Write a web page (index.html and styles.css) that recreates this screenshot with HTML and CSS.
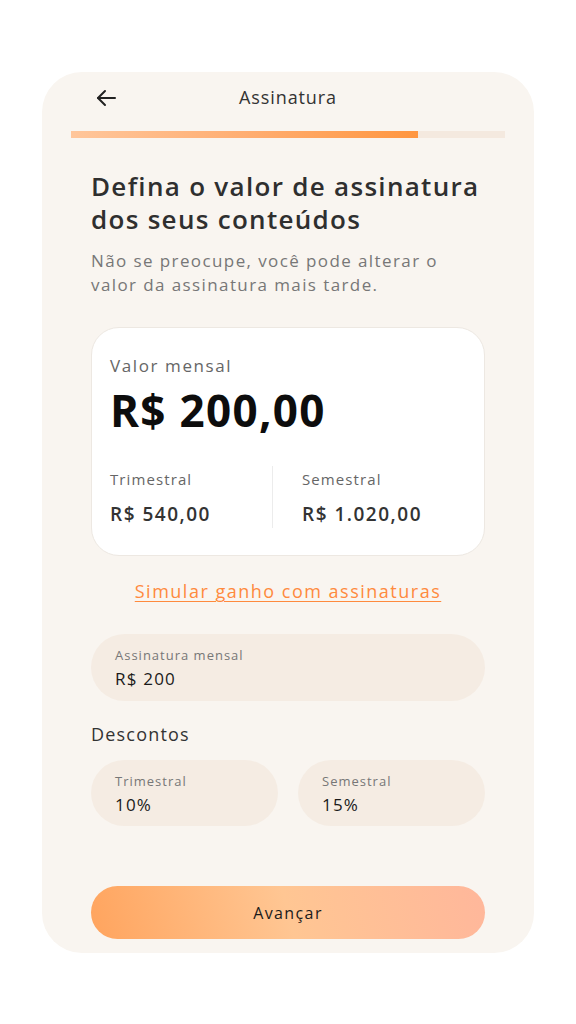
FILE: index.html
```html
<!DOCTYPE html>
<html lang="pt-BR">
<head>
<meta charset="utf-8">
<title>Assinatura</title>
<link rel="stylesheet" href="styles.css">
</head>
<body>
<div class="phone">
  <header class="topbar">
    <button class="back" aria-label="Voltar">
      <svg width="22" height="20" viewBox="0 0 22 20" fill="none" stroke="#222" stroke-width="2" stroke-linecap="round" stroke-linejoin="round"><path d="M20 10H3"/><path d="M10 3L3 10l7 7"/></svg>
    </button>
    <h1 class="title">Assinatura</h1>
  </header>
  <div class="progress"><div class="progress-fill" style="width: 80%"></div></div>

  <main class="content">
    <h2 class="heading">Defina o valor de assinatura dos seus conteúdos</h2>
    <p class="sub">Não se preocupe, você pode alterar o valor da assinatura mais tarde.</p>

    <section class="card">
      <div class="card-label">Valor mensal</div>
      <div class="card-value">R$ 200,00</div>
      <div class="card-cols">
        <div class="col">
          <div class="col-label">Trimestral</div>
          <div class="col-value">R$ 540,00</div>
        </div>
        <div class="divider"></div>
        <div class="col col-right">
          <div class="col-label">Semestral</div>
          <div class="col-value">R$ 1.020,00</div>
        </div>
      </div>
    </section>

    <a class="link" href="#">Simular ganho com assinaturas</a>

    <div class="field">
      <span class="field-label">Assinatura mensal</span>
      <span class="field-value">R$ 200</span>
    </div>

    <h3 class="section-title">Descontos</h3>
    <div class="field-row">
      <div class="field">
        <span class="field-label">Trimestral</span>
        <span class="field-value">10%</span>
      </div>
      <div class="field">
        <span class="field-label">Semestral</span>
        <span class="field-value">15%</span>
      </div>
    </div>

    <button class="cta">Avançar</button>
  </main>
</div>
</body>
</html>
```

FILE: styles.css
```css
* { box-sizing: border-box; }
html, body { margin: 0; padding: 0; background: #ffffff; }
body {
  font-family: "Open Sans", "DejaVu Sans", sans-serif;
  color: #2f2f2f;
  padding: 72px 42px 0;
}
.phone {
  width: 492px;
  height: 881px;
  background: #f9f5f0;
  border-radius: 40px;
  display: flex;
  flex-direction: column;
}
.topbar {
  height: 52px;
  display: flex;
  align-items: center;
  justify-content: center;
  position: relative;
}
.back {
  position: absolute;
  left: 53px;
  top: 16px;
  background: none;
  border: 0;
  padding: 0;
  width: 22px;
  height: 20px;
}
.title {
  margin: 0 0 2px;
  font-size: 18px;
  font-weight: 500;
  color: #333;
  letter-spacing: 0.9px;
}
.progress {
  margin: 7px 29px 0;
  height: 7px;
  background: #f4e9df;
}
.progress-fill {
  height: 100%;
  background: linear-gradient(90deg, #ffc69b 0%, #ffae72 50%, #ff9640 100%);
}
.content {
  padding: 0 49px;
  display: flex;
  flex-direction: column;
}
.heading {
  margin: 32px 0 0;
  font-size: 26px;
  line-height: 33px;
  font-weight: 600;
  color: #2f2f2f;
  letter-spacing: 1.3px;
}
.sub {
  margin: 13px 0 0;
  font-size: 17px;
  line-height: 24px;
  color: #777;
  letter-spacing: 1.4px;
}
.card {
  margin-top: 30px;
  height: 229px;
  background: #ffffff;
  border: 1px solid #ede8e2;
  border-radius: 28px;
  padding: 26px 18px 0;
}
.card-label {
  font-size: 17px;
  line-height: 24px;
  color: #666;
  letter-spacing: 1.6px;
}
.card-value {
  margin-top: 8px;
  font-size: 44px;
  line-height: 48px;
  font-weight: 700;
  color: #0d0d0d;
  letter-spacing: 1.3px;
}
.card-cols {
  margin-top: 33px;
  display: flex;
  align-items: stretch;
}
.col { width: 162px; padding-top: 2px; }
.col-right { padding-left: 29px; width: auto; }
.divider {
  width: 1px;
  height: 62px;
  background: #ececec;
  margin-top: -1px;
}
.col-label {
  font-size: 15px;
  line-height: 20px;
  color: #666;
  letter-spacing: 1.1px;
}
.col-value {
  margin-top: 13px;
  font-size: 19px;
  line-height: 24px;
  font-weight: 600;
  color: #333;
  letter-spacing: 1.5px;
}
.link {
  margin-top: 23px;
  align-self: center;
  font-size: 18px;
  line-height: 24px;
  color: #ff8a3d;
  text-decoration: underline;
  text-underline-offset: 3px;
  text-decoration-thickness: 1px;
  letter-spacing: 1.5px;
}
.field {
  margin-top: 31px;
  height: 67px;
  background: #f5ece3;
  border-radius: 34px;
  padding: 12px 24px 0;
  display: flex;
  flex-direction: column;
}
.field-label {
  font-size: 13px;
  line-height: 18px;
  color: #777;
  letter-spacing: 1px;
}
.field-value {
  margin-top: 3px;
  font-size: 17px;
  line-height: 24px;
  color: #1a1a1a;
  letter-spacing: 1.2px;
}
.section-title {
  margin: 21px 0 0;
  font-size: 18px;
  line-height: 24px;
  font-weight: 500;
  color: #333;
  letter-spacing: 1.2px;
}
.field-row {
  margin-top: 14px;
  display: grid;
  grid-template-columns: 1fr 1fr;
  gap: 20px;
}
.field-row .field { margin-top: 0; height: 66px; }
.cta {
  margin-top: 60px;
  height: 53px;
  border: 0;
  border-radius: 27px;
  background: linear-gradient(75deg, #ffa45e 0%, #ffc693 50%, #ffb79b 100%);
  font-family: "Open Sans", "DejaVu Sans", sans-serif;
  font-size: 16px;
  font-weight: 500;
  color: #1a1a1a;
  letter-spacing: 1.4px;
}
```
